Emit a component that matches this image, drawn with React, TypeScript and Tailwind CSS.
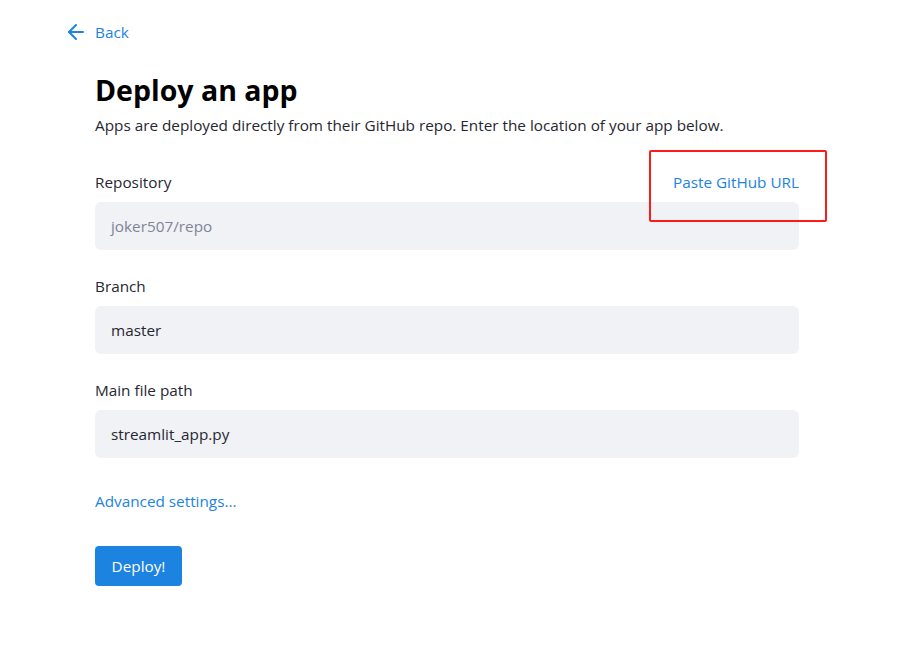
import { ArrowLeft } from "lucide-react";

const Field = ({ label, value, muted, extra }: { label: string; value: string; muted?: boolean; extra?: React.ReactNode }) => (
  <div className="flex flex-col">
    <div className="flex items-center justify-between h-[24px] mb-[8px]">
      <span className="text-[15.3px] text-[#262730]">{label}</span>
      {extra}
    </div>
    <div className={`h-[48px] rounded-[6px] bg-[#f0f2f6] flex items-center px-[16px] text-[15.3px] ${muted ? "text-[#808495]" : "text-[#262730]"}`}>
      {value}
    </div>
  </div>
);

export default function App() {
  return (
    <div className="relative min-h-[650px] w-full bg-white font-['Open_Sans','Noto_Sans',sans-serif]">
      <div className="pt-[20px] pl-[64px]">
        <a href="#" className="flex items-center gap-[7px] text-[15.3px] text-[#1c83e1] w-fit">
          <ArrowLeft size={24} strokeWidth={2} />
          <span>Back</span>
        </a>
      </div>
      <div className="ml-[95px] w-[704px] mt-[26px]">
        <h1 className="text-[28.5px] font-bold text-black leading-[40px]">Deploy an app</h1>
        <p className="text-[15.3px] text-[#262730] mt-[5px] leading-[20px]">
          Apps are deployed directly from their GitHub repo. Enter the location of your app below.
        </p>
        <div className="mt-[35px] flex flex-col gap-[24px]">
          <Field
            label="Repository"
            value="joker507/repo"
            muted
            extra={<a href="#" className="text-[15.3px] text-[#1c83e1]">Paste GitHub URL</a>}
          />
          <Field label="Branch" value="master" />
          <Field label="Main file path" value="streamlit_app.py" />
        </div>
        <a href="#" className="block mt-[33px] text-[15.3px] text-[#1c83e1] leading-[20px]">Advanced settings...</a>
        <button className="mt-[35px] h-[40px] w-[87px] rounded-[4px] bg-[#1c83e1] text-white text-[15.3px]">Deploy!</button>
      </div>
      <div className="absolute left-[649px] top-[150px] w-[178px] h-[72px] border-2 border-[#ff1a1a] rounded-[2px]" />
    </div>
  );
}
